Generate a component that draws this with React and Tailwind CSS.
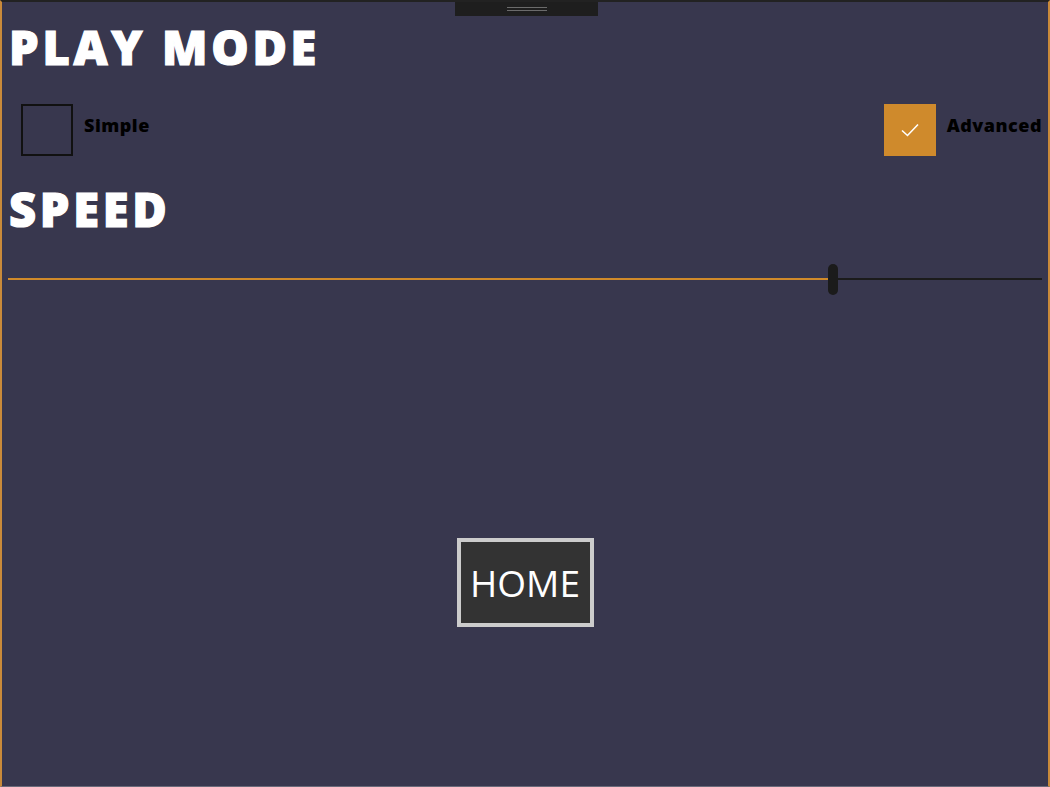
export default function App() {
  const heading = { fontFamily: '"Open Sans", "Noto Sans", sans-serif' };
  const body = { fontFamily: '"Open Sans", "Noto Sans", sans-serif' };
  return (
    <div className="relative w-[1050px] h-[787px] bg-[#38374e] border-l-2 border-r-2 border-t-2 border-b border-l-[#c98a3a] border-r-[#c98a3a] border-t-[#222222] border-b-[#6a6a7a] overflow-hidden">
      <div className="absolute left-[453px] top-0 w-[143px] h-[14px] bg-[#1e1e1e] flex flex-col items-center justify-center gap-[2px]">
        <div className="w-[40px] h-[1px] bg-[#6b6b6b]" />
        <div className="w-[40px] h-[1px] bg-[#6b6b6b]" />
      </div>
      <div className="flex flex-col pl-[6px] pr-[6px]">
        <h1 style={heading} className="text-white font-extrabold text-[47px] leading-none mt-[22px] pl-[1px] tracking-[3.7px] [-webkit-text-stroke:1.2px_white]">PLAY MODE</h1>
        <div className="flex items-center justify-between mt-[33px] pl-[13px]">
          <div className="flex items-center gap-[11px]">
            <div className="w-[52px] h-[52px] border-2 border-[#111111]" />
            <span style={body} className="font-extrabold text-[18px] tracking-[0.5px] text-black -mt-[10px]">Simple</span>
          </div>
          <div className="flex items-center gap-[11px]">
            <div className="w-[52px] h-[52px] bg-[#cf8a2c] flex items-center justify-center">
              <svg width="20" height="16" viewBox="0 0 20 16" fill="none">
                <path d="M2 8.5 L7.5 13.5 L18 2.5" stroke="white" strokeWidth="1.6" />
              </svg>
            </div>
            <span style={body} className="font-extrabold text-[18px] tracking-[0.5px] text-black -mt-[10px]">Advanced</span>
          </div>
        </div>
        <h2 style={heading} className="text-white font-extrabold text-[47px] leading-none mt-[30px] pl-[1px] tracking-[3.7px] [-webkit-text-stroke:1.2px_white]">SPEED</h2>
        <div className="relative mt-[30px] h-[32px] flex items-center">
          <div className="h-[2px] bg-[#d08a2a] w-[820px]" />
          <div className="w-[10px] h-[31px] rounded-[5px] bg-[#1b1b1b]" />
          <div className="h-[2px] bg-[#1b1b1b] flex-1" />
        </div>
        <div className="flex justify-center mt-[243px]">
          <div style={body} className="w-[137px] h-[89px] border-4 border-[#cccccc] bg-[#333333] text-white text-[37px] flex items-center justify-center">
            HOME
          </div>
        </div>
      </div>
    </div>
  );
}
